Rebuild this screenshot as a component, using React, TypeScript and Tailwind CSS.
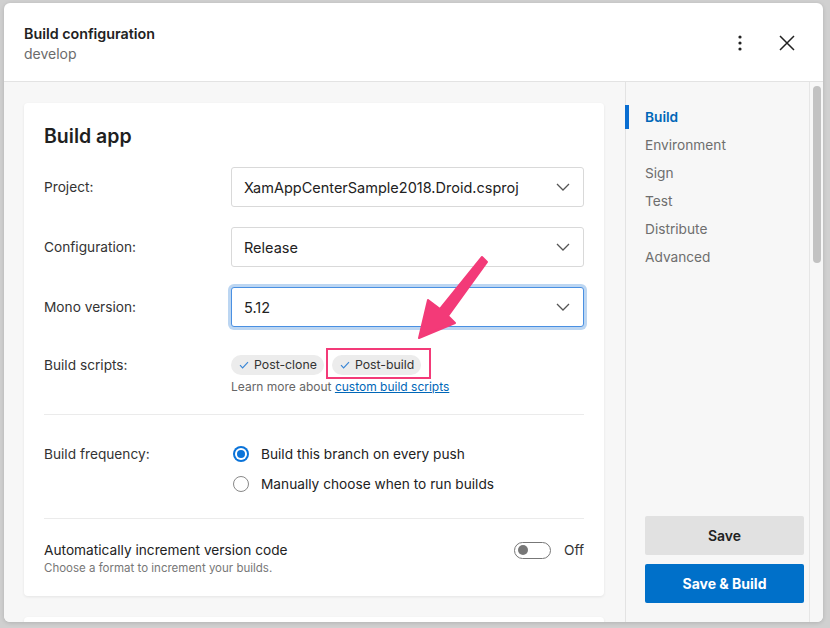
import React from "react";

const font = { fontFamily: "Inter, 'Noto Sans', 'Liberation Sans', sans-serif" };

function Chevron() {
  return (
    <svg width="14" height="8" viewBox="0 0 14 8" fill="none">
      <path d="M1 1l6 6 6-6" stroke="#555" strokeWidth="1.3" />
    </svg>
  );
}

function Select({ value, focused }: { value: string; focused?: boolean }) {
  return (
    <div
      className={
        "flex-1 h-[40px] flex items-center justify-between pl-[12px] pr-[13px] rounded-[3px] bg-white border " +
        (focused
          ? "border-[#4a90e2] shadow-[0_0_0_3px_#bcd6f2]"
          : "border-[#d9d9d9]")
      }
    >
      <span className="text-[14.5px] text-[#222] pt-[1px]">{value}</span>
      <Chevron />
    </div>
  );
}

function Check() {
  return (
    <svg width="10" height="8" viewBox="0 0 10 8" fill="none">
      <path d="M1 4.2l2.6 2.6L9 1.2" stroke="#3b87d6" strokeWidth="1.2" />
    </svg>
  );
}

function Chip({ label }: { label: string }) {
  return (
    <span className="inline-flex items-center h-[20px] rounded-full bg-[#ececec] pl-[8px] pr-[7px] gap-[5px] text-[12.3px] text-[#333]">
      <Check />
      {label}
    </span>
  );
}

export default function App() {
  return (
    <div style={font} className="relative w-[830px] h-[628px] bg-[#d0d0d0] overflow-hidden pt-[3px] pl-[4px]">
      <div className="w-[819px] h-[619px] bg-white rounded-[6px] overflow-hidden flex flex-col shadow-[0_1px_4px_rgba(0,0,0,0.15)]">
        {/* Header */}
        <div className="h-[79px] shrink-0 flex items-center justify-between pl-[20px] pr-[28px] border-b border-[#e3e3e3]">
          <div className="flex flex-col pt-[3px]">
            <span className="text-[14.3px] font-semibold text-[#222] leading-[20px]">Build configuration</span>
            <span className="text-[14px] text-[#6b6b6b] leading-[20px]">develop</span>
          </div>
          <div className="flex items-center gap-[37px] pt-[2px]">
            <svg width="4" height="16" viewBox="0 0 4 16">
              <circle cx="2" cy="2" r="1.6" fill="#222" />
              <circle cx="2" cy="8" r="1.6" fill="#222" />
              <circle cx="2" cy="14" r="1.6" fill="#222" />
            </svg>
            <svg width="16" height="16" viewBox="0 0 16 16" fill="none">
              <path d="M1 1l14 14M15 1L1 15" stroke="#222" strokeWidth="1.5" />
            </svg>
          </div>
        </div>

        {/* Body */}
        <div className="flex flex-1 bg-[#f7f7f7] min-h-0">
          <div className="w-[621px] shrink-0 pl-[20px] pt-[21px] flex flex-col gap-[21px] overflow-hidden">
            <div className="w-[580px] shrink-0 bg-white rounded-[4px] shadow-[0_1px_3px_rgba(0,0,0,0.08)] px-[20px] pt-[19px] pb-[20px]">
              <h2 className="text-[19.5px] font-semibold text-[#1f1f1f] leading-[28px]">Build app</h2>

              <div className="mt-[17px] flex flex-col gap-[20px]">
                <div className="flex items-center">
                  <span className="w-[187px] text-[13.7px] text-[#333]">Project:</span>
                  <Select value="XamAppCenterSample2018.Droid.csproj" />
                </div>
                <div className="flex items-center">
                  <span className="w-[187px] text-[13.7px] text-[#333]">Configuration:</span>
                  <Select value="Release" />
                </div>
                <div className="flex items-center">
                  <span className="w-[187px] text-[13.7px] text-[#333]">Mono version:</span>
                  <Select value="5.12" focused />
                </div>
              </div>

              <div className="mt-[28px] flex">
                <span className="w-[187px] text-[13.7px] text-[#333] leading-[20px]">Build scripts:</span>
                <div className="flex flex-col">
                  <div className="flex items-center gap-[8px]">
                    <Chip label="Post-clone" />
                    <span className="relative inline-flex">
                      <Chip label="Post-build" />
                      <span className="absolute -left-[6px] -right-[10px] -top-[7px] -bottom-[4px] border-2 border-[#f33a78]" />
                    </span>
                  </div>
                  <span className="text-[12px] text-[#666] leading-[16px] mt-[4px]">
                    Learn more about{" "}
                    <span className="text-[#0067b8] underline">custom build scripts</span>
                  </span>
                </div>
              </div>

              <div className="mt-[19px] h-px bg-[#ebebeb]" />

              <div className="mt-[29px] flex">
                <span className="w-[187px] text-[13.7px] text-[#333] leading-[20px]">Build frequency:</span>
                <div className="flex flex-col gap-[10px] pl-[2px]">
                  <div className="flex items-center gap-[12px] h-[20px]">
                    <span className="w-[16px] h-[16px] rounded-full bg-[#0a73d9] flex items-center justify-center">
                      <span className="w-[12px] h-[12px] rounded-full bg-white flex items-center justify-center">
                        <span className="w-[8px] h-[8px] rounded-full bg-[#0a73d9]" />
                      </span>
                    </span>
                    <span className="text-[13.7px] text-[#222]">Build this branch on every push</span>
                  </div>
                  <div className="flex items-center gap-[12px] h-[20px]">
                    <span className="w-[16px] h-[16px] rounded-full border border-[#888] bg-white" />
                    <span className="text-[13.7px] text-[#222]">Manually choose when to run builds</span>
                  </div>
                </div>
              </div>

              <div className="mt-[24px] h-px bg-[#ebebeb]" />

              <div className="mt-[21px] flex items-start justify-between">
                <div className="flex flex-col">
                  <span className="text-[13.7px] text-[#222] leading-[20px]">Automatically increment version code</span>
                  <span className="text-[11.5px] text-[#777] leading-[16px]">Choose a format to increment your builds.</span>
                </div>
                <div className="flex items-center gap-[13px] h-[20px]">
                  <span className="w-[37px] h-[17px] rounded-full border border-[#777] flex items-center pl-[3px]">
                    <span className="w-[10px] h-[10px] rounded-full bg-[#777]" />
                  </span>
                  <span className="text-[13.7px] text-[#333]">Off</span>
                </div>
              </div>
            </div>
            <div className="w-[580px] h-[60px] shrink-0 bg-white rounded-[4px] shadow-[0_1px_3px_rgba(0,0,0,0.08)]" />
          </div>

          {/* Sidebar */}
          <div className="w-[184px] shrink-0 border-l border-[#e3e3e3] flex flex-col justify-between pt-[21px] pb-[19px]">
            <div className="flex flex-col">
              {["Build", "Environment", "Sign", "Test", "Distribute", "Advanced"].map((item, i) => (
                <div key={item} className="relative h-[28px] flex items-center pl-[19px]">
                  {i === 0 && <span className="absolute -left-px top-[2px] h-[24px] w-[4px] bg-[#0a6ed1]" />}
                  <span
                    className={
                      "text-[13.7px] " +
                      (i === 0 ? "text-[#0067b8] font-semibold" : "text-[#6e6e6e]")
                    }
                  >
                    {item}
                  </span>
                </div>
              ))}
            </div>
            <div className="flex flex-col gap-[9px] pl-[19px] pr-[4px]">
              <button className="h-[39px] w-[159px] rounded-[2px] bg-[#e1e1e1] text-[14px] font-semibold text-[#222]">Save</button>
              <button className="h-[39px] w-[159px] rounded-[2px] bg-[#0070c9] text-[14px] font-bold text-white">Save &amp; Build</button>
            </div>
          </div>

          {/* Scrollbar */}
          <div className="w-[15px] shrink-0 border-l border-[#e6e6e6] flex justify-center pt-[4px]">
            <div className="w-[8px] h-[177px] rounded-full bg-[#c2c2c2]" />
          </div>
        </div>
      </div>

      {/* Annotation arrow */}
      <svg className="absolute left-0 top-0 pointer-events-none" width="830" height="628" viewBox="0 0 830 628">
        <polygon
          points="419,338 428,300 440,309 482,257 487,262 448,316 455,323"
          fill="#f33a78"
          stroke="#f33a78"
          strokeWidth="2"
          strokeLinejoin="round"
        />
      </svg>
    </div>
  );
}
